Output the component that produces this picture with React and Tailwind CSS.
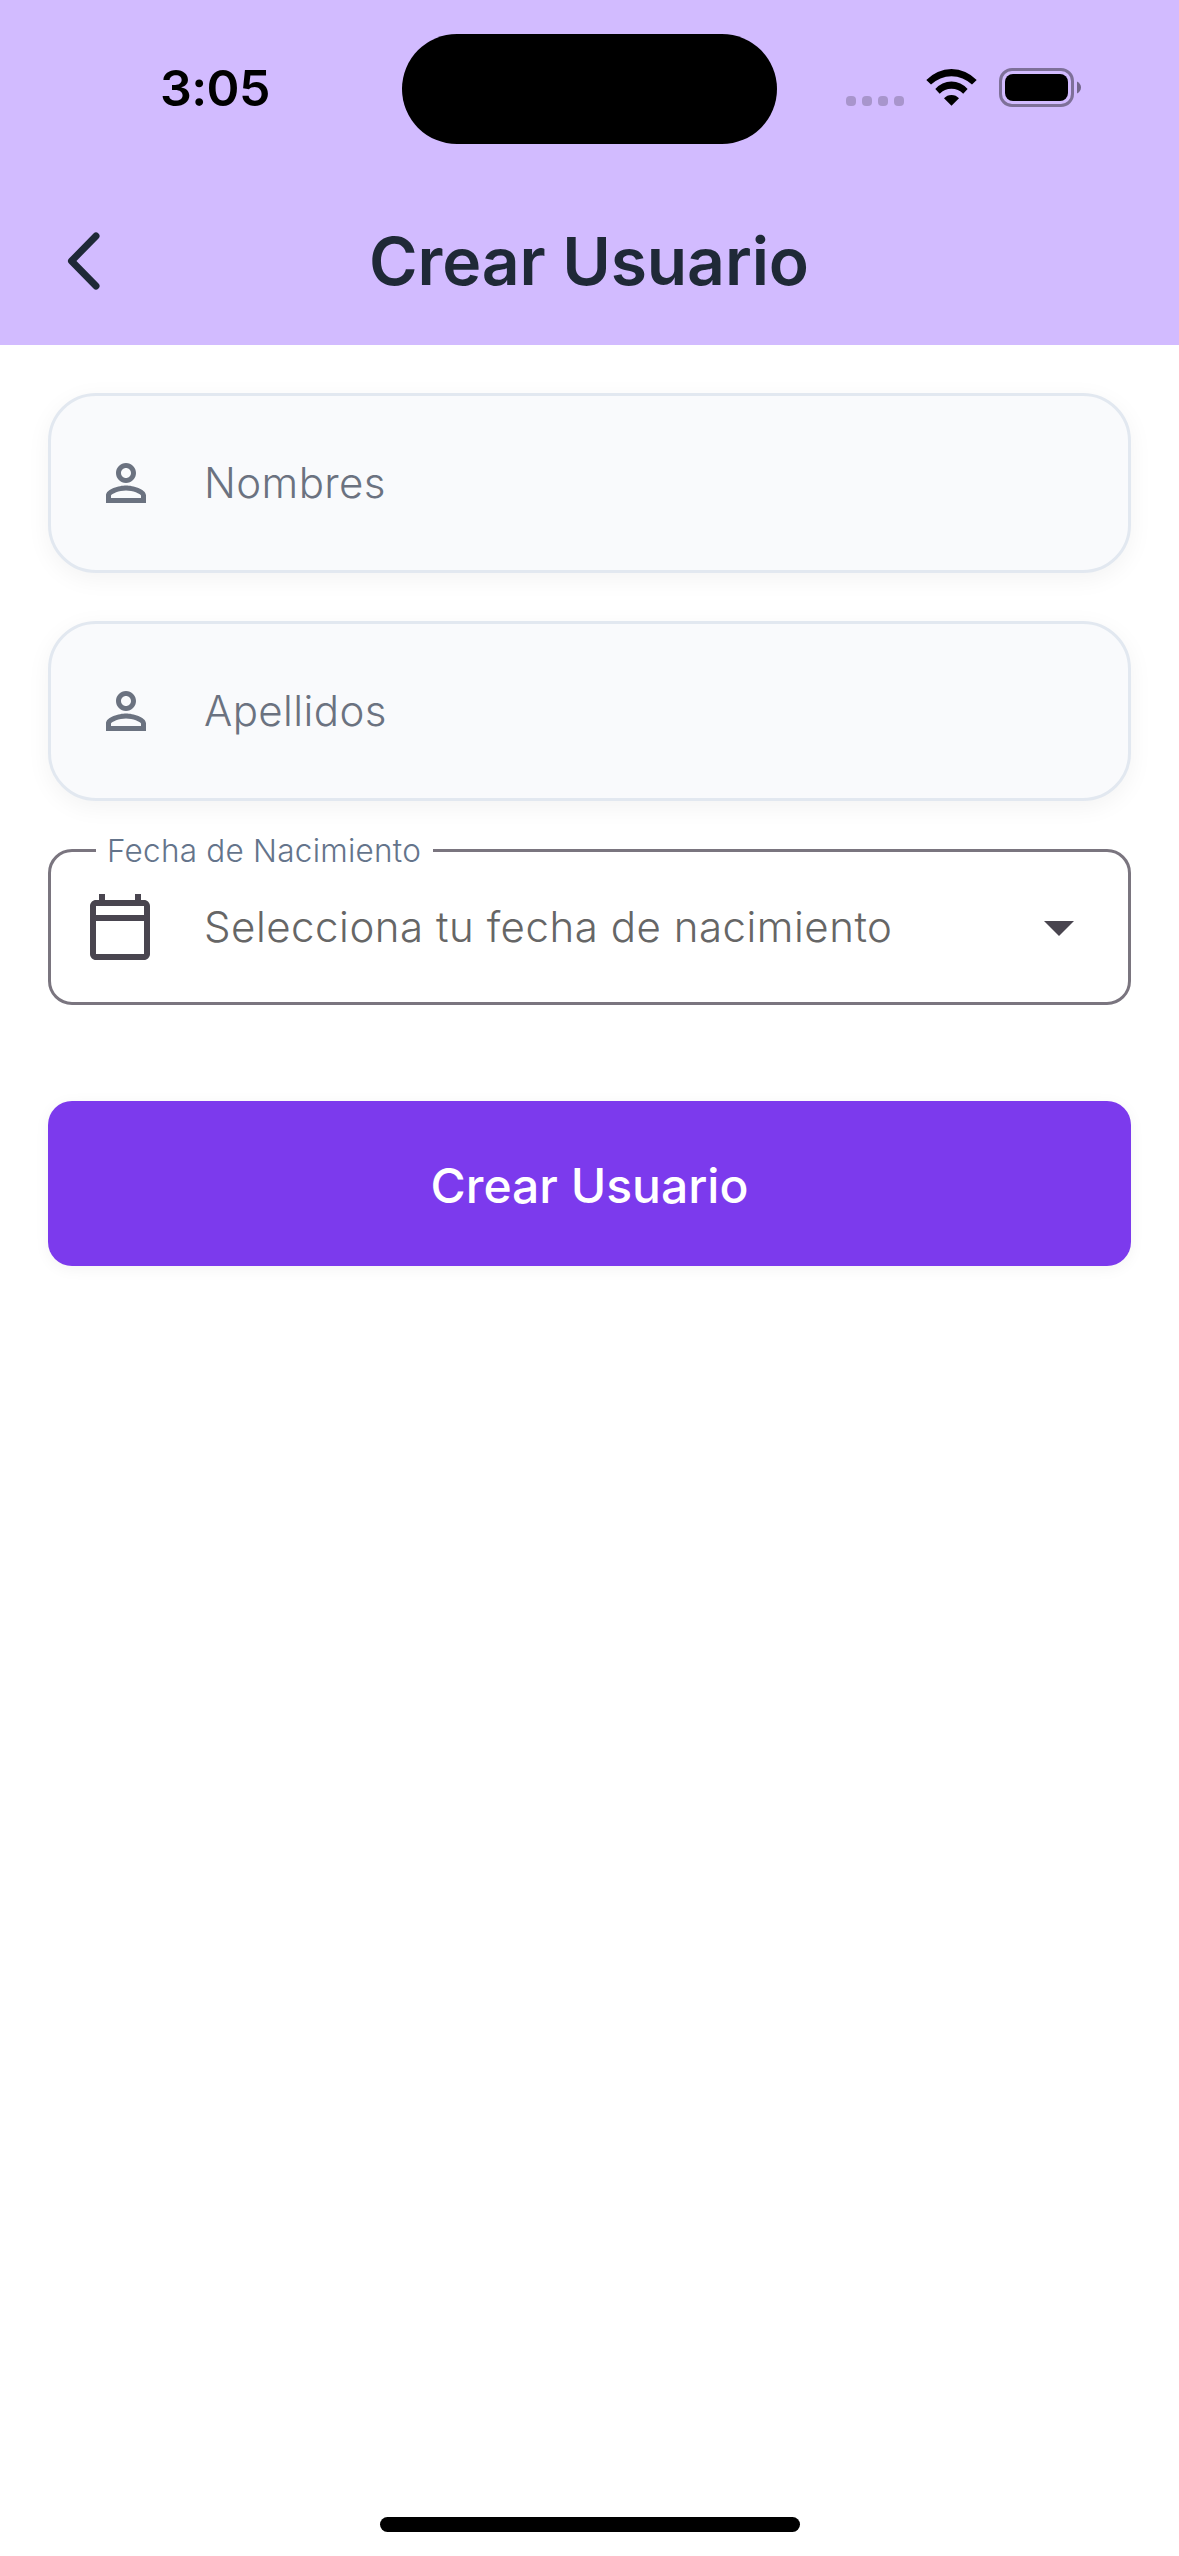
function StatusBar() {
  return (
    <div className="flex h-[177px] items-start text-black">
      <div className="flex h-[176px] w-[402px] items-center pl-[160px]">
        <span className="text-[50px] leading-none font-semibold tracking-[-0.6px]">3:05</span>
      </div>
      <div className="mt-[34px] h-[110px] w-[375px] rounded-full bg-black" />
      <div className="flex h-[175px] w-[402px] items-center pl-[69px]">
        <div className="mt-[27px] flex gap-[6px]">
          <span className="size-[10px] rounded-[4px] bg-black/20" />
          <span className="size-[10px] rounded-[4px] bg-black/20" />
          <span className="size-[10px] rounded-[4px] bg-black/20" />
          <span className="size-[10px] rounded-[4px] bg-black/20" />
        </div>
        <svg className="ml-[22px] h-[37px] w-[51px]" viewBox="0 0 51 37" fill="currentColor">
          <path d="M0.3 11A34.4 34.4 0 0 1 50.7 11L46 15.6A29.5 29.5 0 0 0 5 15.6Z" />
          <path d="M9.3 20A21.2 21.2 0 0 1 41.6 20L37.2 24.7A16.7 16.7 0 0 0 13.7 24.7Z" />
          <path d="M18 29.3A10 10 0 0 1 33 29.3L25.5 36.7Z" />
        </svg>
        <div className="ml-[22px] h-[39px] w-[75px] rounded-[13px] border-[3px] border-black/40 p-[3px]">
          <div className="h-full rounded-[8px] bg-black" />
        </div>
        <svg className="ml-[3px] h-[13px] w-[4px]" viewBox="0 0 4 13" fill="#000000" fillOpacity="0.45">
          <path d="M0 0.5C2.4 1.6 4 3.8 4 6.5S2.4 11.4 0 12.5Z" />
        </svg>
      </div>
    </div>
  );
}

function TitleBar() {
  return (
    <div className="flex h-[168px] items-center text-[#1f2937]">
      <div className="flex w-[369px] pl-[61px]">
        <svg className="h-[64px] w-[44px]" viewBox="0 0 44 64" fill="none" stroke="currentColor" strokeWidth="7" strokeLinecap="round" strokeLinejoin="round">
          <path d="M35 7 10.5 32 35 57" />
        </svg>
      </div>
      <h1 className="text-[66px] leading-none font-semibold tracking-[-0.1px] whitespace-nowrap">Crear Usuario</h1>
    </div>
  );
}

function TextField({ label }) {
  return (
    <div className="flex h-[180px] items-center rounded-[48px] border-[3px] border-[#e2e8f0] bg-[#f9fafc] pl-[45px] text-[#6b7280] shadow-[0_6px_24px_rgba(0,0,0,0.05)]">
      <svg className="size-[60px]" viewBox="0 0 24 24" fill="currentColor">
        <path d="M12 6c1.1 0 2 .9 2 2s-.9 2-2 2-2-.9-2-2 .9-2 2-2m0 9c2.7 0 5.8 1.29 6 2v1H6v-.99c.2-.72 3.3-2.01 6-2.01m0-11C9.79 4 8 5.79 8 8s1.79 4 4 4 4-1.79 4-4-1.79-4-4-4zm0 9c-2.67 0-8 1.34-8 4v3h16v-3c0-2.66-5.33-4-8-4z" />
      </svg>
      <span className="ml-[48px] text-[42px] leading-none font-light tracking-[0.4px]">{label}</span>
    </div>
  );
}

function DateField() {
  return (
    <div className="relative flex h-[156px] items-center rounded-[24px] border-[3px] border-[#7a757f] pr-[33px] pl-[33px] text-[#49454f]">
      <span className="absolute -top-[21px] left-[45px] flex h-[40px] w-[337px] items-center bg-white pl-[11px] text-[31.5px] leading-none font-light tracking-[0.24px] whitespace-nowrap text-[#64748b]">
        Fecha de Nacimiento
      </span>
      <svg className="size-[72px]" viewBox="0 0 24 24" fill="currentColor">
        <path d="M20 3h-1V1h-2v2H7V1H5v2H4c-1.1 0-2 .9-2 2v16c0 1.1.9 2 2 2h16c1.1 0 2-.9 2-2V5c0-1.1-.9-2-2-2zm0 18H4V10h16v11zm0-13H4V5h16v3z" />
      </svg>
      <span className="ml-[48px] grow text-[42px] leading-none font-light tracking-[0.52px] whitespace-nowrap text-[#666666]">
        Selecciona tu fecha de nacimiento
      </span>
      <svg className="size-[72px] shrink-0" viewBox="0 0 24 24" fill="currentColor">
        <path d="M7 10l5 5 5-5z" />
      </svg>
    </div>
  );
}

export default function App() {
  return (
    <div className="flex h-[2556px] w-[1179px] flex-col bg-white font-['Inter',sans-serif]">
      <header className="bg-[#d2bbff]">
        <StatusBar />
        <TitleBar />
      </header>
      <main className="flex grow flex-col gap-[48px] px-[48px] pt-[48px]">
        <TextField label="Nombres" />
        <TextField label="Apellidos" />
        <DateField />
        <button className="mt-[48px] h-[165px] rounded-[24px] bg-[#7c3aed] pt-[4px] text-[48px] leading-none font-medium text-white shadow-[0_3px_15px_rgba(0,0,0,0.05)]">
          Crear Usuario
        </button>
      </main>
      <div className="mb-[24px] h-[15px] w-[420px] self-center rounded-full bg-black" />
    </div>
  );
}
